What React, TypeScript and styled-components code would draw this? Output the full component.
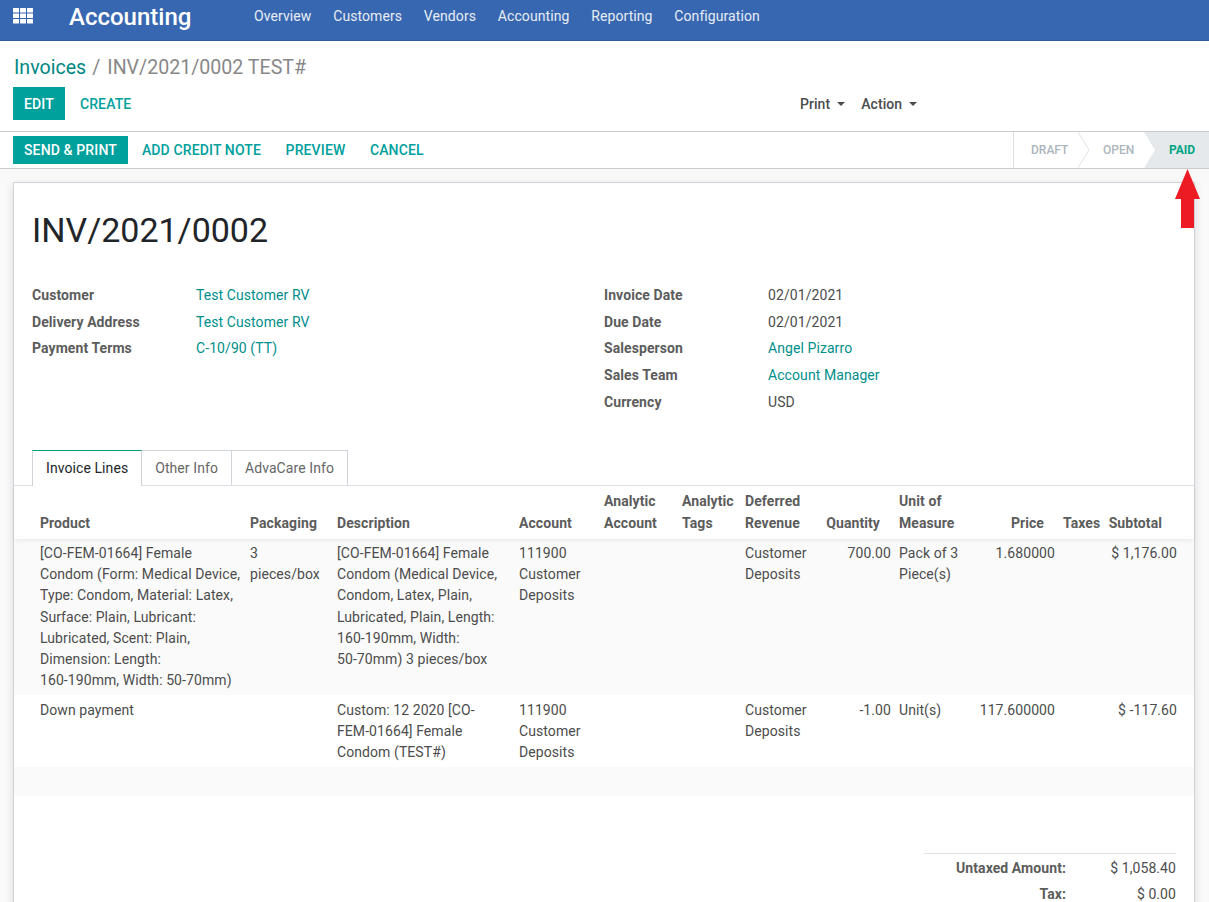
import React from "react";
import styled, { createGlobalStyle } from "styled-components";

const GlobalStyle = createGlobalStyle`
  html, body {
    margin: 0;
    height: 100%;
    overflow: hidden;
    background: #f9f9f9;
    font-family: Roboto, "Noto Sans", sans-serif;
    font-size: 14px;
    line-height: 21px;
    letter-spacing: 0.08px;
    color: #4c4c4c;
  }
  * { box-sizing: border-box; }
`;

const Page = styled.div`
  position: relative;
  height: 902px;
  overflow: hidden;
`;

const Navbar = styled.nav`
  display: flex;
  align-items: flex-start;
  height: 41px;
  background: #3767b0;
  border-bottom: 1px solid #2f5a9b;
  color: #fff;
`;
const AppsButton = styled.div`
  width: 69px;
  padding: 8px 0 0 13px;
  line-height: 0;
`;
const Brand = styled.div`
  width: 185px;
  font-size: 24px;
  line-height: 34px;
  font-weight: 500;
  letter-spacing: 0;
`;
const NavLink = styled.a`
  margin-right: 21.8px;
  font-size: 14px;
  line-height: 32px;
  color: #e8edf5;
`;

const ControlPanel = styled.div`
  height: 91px;
  padding: 15px 13px 0;
  background: #fff;
  border-bottom: 1px solid #ccc;
`;
const Breadcrumb = styled.div`
  padding-left: 1px;
  font-size: 19.6px;
  line-height: 24px;
  letter-spacing: 0;
  color: #888;
`;
const Crumb = styled.a`
  color: #008784;
`;
const Slash = styled.span`
  margin: 0 7px 0 6px;
`;
const ControlRow = styled.div`
  display: flex;
  align-items: center;
  margin-top: 7px;
  height: 33px;
`;
const PrimaryButton = styled.button<{ $tall?: boolean }>`
  border: 0;
  background: #00a09d;
  color: #fff;
  font: inherit;
  font-weight: 500;
  letter-spacing: 0.13px;
  height: ${({ $tall }) => ($tall ? "33px" : "28px")};
  padding: ${({ $tall }) => ($tall ? "1px" : "0")} 11px 0;
`;
const LinkButton = styled.button`
  border: 0;
  background: transparent;
  color: #00a09d;
  font: inherit;
  font-weight: 500;
  letter-spacing: 0.13px;
  padding: 0;
  margin-left: 14px;
  margin-right: 10.5px;
`;
const CreateButton = styled(LinkButton)`
  padding-top: 1px;
  margin-left: 15px;
`;
const Dropdowns = styled.div`
  display: flex;
  margin-left: 658px;
  padding-top: 1px;
  gap: 16px;
`;
const Dropdown = styled.span`
  display: flex;
  align-items: center;
  font-weight: 500;
  color: #4c4c4c;
  &:after {
    content: "";
    margin-left: 7px;
    border-top: 4px solid #4c4c4c;
    border-left: 4px solid transparent;
    border-right: 4px solid transparent;
  }
`;

const StatusBar = styled.div`
  display: flex;
  align-items: stretch;
  justify-content: space-between;
  height: 37px;
  padding-left: 13px;
  background: #fff;
  border-bottom: 1px solid #ccc;
`;
const ActionButtons = styled.div`
  display: flex;
  align-items: center;
`;
const Steps = styled.div`
  display: flex;
  border-left: 1px solid #dee2e6;
  height: 36px;
`;
const Step = styled.div<{ $active?: boolean; $width: number; $pad: number }>`
  width: ${({ $width }) => $width}px;
  padding-left: ${({ $pad }) => $pad}px;
  font-size: 12px;
  font-weight: ${({ $active }) => ($active ? 700 : 500)};
  letter-spacing: 0;
  line-height: 36px;
  color: ${({ $active }) => ($active ? "#00a585" : "#adb5bd")};
  background: ${({ $active }) => ($active ? "#e6e9ec" : "#fff")};
`;
const Chevron = styled.svg`
  display: block;
  width: 11px;
  height: 36px;
`;

const RedArrow = styled.svg`
  position: absolute;
  left: 1175px;
  top: 169px;
  width: 25px;
  height: 59px;
`;

const Content = styled.div`
  padding: 13px 14px 0 13px;
`;
const Sheet = styled.div`
  background: #fff;
  border: 1px solid #ced4da;
  box-shadow: 0 3px 8px rgba(0, 0, 0, 0.12);
  height: 760px;
`;
const Title = styled.h1`
  margin: 0;
  padding: 27px 0 0 18px;
  font-size: 34px;
  line-height: 41px;
  font-weight: 400;
  letter-spacing: 0;
  color: #212529;
`;
const FieldColumns = styled.div`
  display: grid;
  grid-template-columns: 572px 1fr;
  padding: 31px 0 0 18px;
  height: 199px;
`;
const FieldGroup = styled.div`
  display: flex;
  flex-direction: column;
`;
const Field = styled.div`
  display: flex;
  height: 26.7px;
  line-height: 26px;
`;
const FieldLabel = styled.div`
  width: 164px;
  font-weight: 700;
  color: #5c5c5c;
`;
const FieldLink = styled.a`
  color: #008f8c;
`;

const Tabs = styled.div`
  display: flex;
  padding-left: 18px;
  height: 36px;
  border-bottom: 1px solid #dee2e6;
`;
const Tab = styled.div<{ $active?: boolean }>`
  height: ${({ $active }) => ($active ? "36px" : "35px")};
  padding: 7px 13px 0;
  border: 1px solid #ced4da;
  border-left-width: ${({ $active }) => ($active ? "1px" : "0")};
  border-bottom-width: 0;
  border-top-color: ${({ $active }) => ($active ? "#00a070" : "#ced4da")};
  background: #fff;
  color: ${({ $active }) => ($active ? "#212529" : "#666")};
`;

const Lines = styled.table`
  width: 100%;
  border-collapse: collapse;
  table-layout: fixed;
`;
const HeadRow = styled.tr`
  box-shadow: 0 2px 4px rgba(0, 0, 0, 0.06);
  position: relative;
`;
const Th = styled.th<{ $right?: boolean }>`
  padding: 4px ${({ $right }) => ($right ? "15px" : "4px")} 5px 4px;
  text-align: ${({ $right }) => ($right ? "right" : "left")};
  vertical-align: bottom;
  line-height: 22px;
  font-weight: 700;
  color: #5c5c5c;
  &:first-child { padding-left: 26px; }
  &:last-child { padding-right: 32px; }
`;
const Row = styled.tr<{ $striped?: boolean }>`
  background: ${({ $striped }) => ($striped ? "#fafafa" : "#fff")};
  td {
    padding-top: ${({ $striped }) => ($striped ? "4px" : "5px")};
    padding-bottom: ${({ $striped }) => ($striped ? "3.6px" : "3.4px")};
  }
`;
const Td = styled.td<{ $right?: boolean }>`
  padding: 4px;
  line-height: 21.2px;
  vertical-align: top;
  text-align: ${({ $right }) => ($right ? "right" : "left")};
  &:first-child { padding-left: 26px; }
  &:nth-child(3) { padding-right: 14px; }
  &:last-child { padding-right: 17px; }
`;
const EmptyRow = styled.tr`
  height: 29px;
  background: #fafafa;
`;

const Totals = styled.div`
  width: 252px;
  margin: 57px 0 0 910px;
  padding-top: 4px;
  border-top: 1px solid #dee2e6;
`;
const TotalRow = styled.div`
  display: grid;
  grid-template-columns: 142px 1fr;
  height: 26px;
  line-height: 21px;
  text-align: right;
`;
const TotalLabel = styled.div`
  font-weight: 700;
  color: #5c5c5c;
`;

const navItems = ["Overview", "Customers", "Vendors", "Accounting", "Reporting", "Configuration"];

const columns = [
  { label: "Product", width: 232 },
  { label: "Packaging", width: 87 },
  { label: "Description", width: 182 },
  { label: "Account", width: 85 },
  { label: "Analytic Account", width: 78 },
  { label: "Analytic Tags", width: 63 },
  { label: "Deferred Revenue", width: 81 },
  { label: "Quantity", width: 73, right: true },
  { label: "Unit of Measure", width: 73 },
  { label: "Price", width: 91, right: true },
  { label: "Taxes", width: 45 },
  { label: "Subtotal", width: 90, right: true },
];

// word joiner keeps the size ranges on one line, the reference never breaks them
const rows = [
  {
    striped: true,
    cells: [
      "[CO-FEM-01664] Female Condom (Form: Medical Device, Type: Condom, Material: Latex, Surface: Plain, Lubricant: Lubricated, Scent: Plain, Dimension: Length: 160-\u2060190mm, Width: 50-\u206070mm)",
      "3 pieces/box",
      "[CO-FEM-01664] Female Condom (Medical Device, Condom, Latex, Plain, Lubricated, Plain, Length: 160-\u2060190mm, Width: 50-\u206070mm) 3 pieces/box",
      "111900 Customer Deposits",
      "",
      "",
      "Customer Deposits",
      "700.00",
      "Pack of 3 Piece(s)",
      "1.680000",
      "",
      "$ 1,176.00",
    ],
  },
  {
    striped: false,
    cells: [
      "Down payment",
      "",
      "Custom: 12 2020 [CO-FEM-01664] Female Condom (TEST#)",
      "111900 Customer Deposits",
      "",
      "",
      "Customer Deposits",
      "-1.00",
      "Unit(s)",
      "117.600000",
      "",
      "$ -117.60",
    ],
  },
];

const leftFields = [
  { label: "Customer", value: "Test Customer RV", link: true },
  { label: "Delivery Address", value: "Test Customer RV", link: true },
  { label: "Payment Terms", value: "C-10/90 (TT)", link: true },
];
const rightFields = [
  { label: "Invoice Date", value: "02/01/2021" },
  { label: "Due Date", value: "02/01/2021" },
  { label: "Salesperson", value: "Angel Pizarro", link: true },
  { label: "Sales Team", value: "Account Manager", link: true },
  { label: "Currency", value: "USD" },
];

const AppsIcon = () => (
  <svg width="20" height="16" viewBox="0 0 20 16" fill="#fff">
    {[0, 5.5, 11].map((y) =>
      [0, 7, 14].map((x) => <rect key={`${x}-${y}`} x={x} y={y} width="6" height="4.5" rx="0.5" />)
    )}
  </svg>
);

const FieldList = ({ fields }: { fields: { label: string; value: string; link?: boolean }[] }) => (
  <FieldGroup>
    {fields.map((f) => (
      <Field key={f.label}>
        <FieldLabel>{f.label}</FieldLabel>
        {f.link ? <FieldLink>{f.value}</FieldLink> : <span>{f.value}</span>}
      </Field>
    ))}
  </FieldGroup>
);

const App = () => {
  return (
    <Page>
      <GlobalStyle />
      <Navbar>
        <AppsButton>
          <AppsIcon />
        </AppsButton>
        <Brand>Accounting</Brand>
        {navItems.map((item) => (
          <NavLink key={item}>{item}</NavLink>
        ))}
      </Navbar>
      <ControlPanel>
        <Breadcrumb>
          <Crumb>Invoices</Crumb>
          <Slash>/</Slash>
          INV/2021/0002 TEST#
        </Breadcrumb>
        <ControlRow>
          <PrimaryButton $tall>EDIT</PrimaryButton>
          <CreateButton>CREATE</CreateButton>
          <Dropdowns>
            <Dropdown>Print</Dropdown>
            <Dropdown>Action</Dropdown>
          </Dropdowns>
        </ControlRow>
      </ControlPanel>
      <StatusBar>
        <ActionButtons>
          <PrimaryButton>SEND &amp; PRINT</PrimaryButton>
          <LinkButton>ADD CREDIT NOTE</LinkButton>
          <LinkButton>PREVIEW</LinkButton>
          <LinkButton>CANCEL</LinkButton>
        </ActionButtons>
        <Steps>
          <Step $width={64} $pad={17}>DRAFT</Step>
          <Chevron viewBox="0 0 11 36">
            <path d="M0 0 L11 18 L0 36" fill="#fff" stroke="#dee2e6" />
          </Chevron>
          <Step $width={55} $pad={14}>OPEN</Step>
          <Chevron viewBox="0 0 11 36">
            <rect width="11" height="36" fill="#e6e9ec" />
            <path d="M0 0 L11 18 L0 36 Z" fill="#fff" />
          </Chevron>
          <Step $active $width={54} $pad={14}>PAID</Step>
        </Steps>
      </StatusBar>
      <Content>
        <Sheet>
          <Title>INV/2021/0002</Title>
          <FieldColumns>
            <FieldList fields={leftFields} />
            <FieldList fields={rightFields} />
          </FieldColumns>
          <Tabs>
            <Tab $active>Invoice Lines</Tab>
            <Tab>Other Info</Tab>
            <Tab>AdvaCare Info</Tab>
          </Tabs>
          <Lines>
            <colgroup>
              {columns.map((c) => (
                <col key={c.label} width={c.width} />
              ))}
            </colgroup>
            <thead>
              <HeadRow>
                {columns.map((c) => (
                  <Th key={c.label} $right={c.right}>
                    {c.label}
                  </Th>
                ))}
              </HeadRow>
            </thead>
            <tbody>
              {rows.map((r, i) => (
                <Row key={i} $striped={r.striped}>
                  {r.cells.map((cell, j) => (
                    <Td key={j} $right={columns[j].right}>
                      {cell}
                    </Td>
                  ))}
                </Row>
              ))}
              <EmptyRow>
                <td colSpan={12} />
              </EmptyRow>
            </tbody>
          </Lines>
          <Totals>
            <TotalRow>
              <TotalLabel>Untaxed Amount:</TotalLabel>
              <span>$ 1,058.40</span>
            </TotalRow>
            <TotalRow>
              <TotalLabel>Tax:</TotalLabel>
              <span>$ 0.00</span>
            </TotalRow>
          </Totals>
        </Sheet>
      </Content>
      <RedArrow viewBox="0 0 25 59">
        <path d="M12.5 0 L25 30 L19 30 L19 59 L6 59 L6 30 L0 30 Z" fill="#ed1c24" />
      </RedArrow>
    </Page>
  );
};

export default App;
